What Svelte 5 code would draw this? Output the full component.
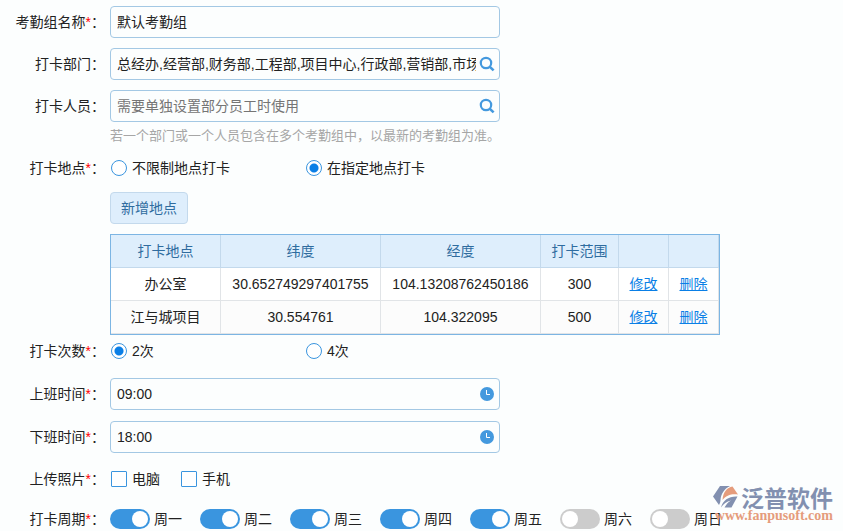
<script lang="ts">
	type Place = { name: string; lat: string; lng: string; range: number };

	let groupName = $state('默认考勤组');
	let departments = $state('总经办,经营部,财务部,工程部,项目中心,行政部,营销部,市场部');
	let members = $state('');
	let placeMode = $state('fixed');
	let times = $state(2);
	let startTime = $state('09:00');
	let endTime = $state('18:00');
	let photo = $state({ pc: false, phone: false });

	let places: Place[] = $state([
		{ name: '办公室', lat: '30.652749297401755', lng: '104.13208762450186', range: 300 },
		{ name: '江与城项目', lat: '30.554761', lng: '104.322095', range: 500 }
	]);

	let days = $state([
		{ label: '周一', on: true },
		{ label: '周二', on: true },
		{ label: '周三', on: true },
		{ label: '周四', on: true },
		{ label: '周五', on: true },
		{ label: '周六', on: false },
		{ label: '周日', on: false }
	]);
</script>

{#snippet caption(text: string, required: boolean)}
	{text}{#if required}<span class="star">*</span>{/if}：
{/snippet}

{#snippet searchIcon()}
	<svg width="16" height="16" viewBox="0 0 16 16" aria-hidden="true">
		<circle cx="7" cy="7" r="5.2" fill="none" stroke="currentColor" stroke-width="2.2" />
		<path d="M10.600 10.600L14.600 14.400" stroke="currentColor" stroke-width="2.600" />
	</svg>
{/snippet}

{#snippet clockIcon()}
	<svg width="16" height="16" viewBox="0 0 16 16" aria-hidden="true">
		<circle cx="8" cy="8" r="7" fill="currentColor" />
		<path d="M7.500 4V8.500H11" fill="none" stroke="#fff" stroke-width="1" />
	</svg>
{/snippet}

<form class="page" onsubmit={(ev) => ev.preventDefault()}>
	<div class="row">
		<label class="caption" for="group-name">{@render caption('考勤组名称', true)}</label>
		<div class="field">
			<div class="box"><input id="group-name" type="text" bind:value={groupName} /></div>
		</div>
	</div>

	<div class="row">
		<label class="caption" for="departments">{@render caption('打卡部门', false)}</label>
		<div class="field">
			<div class="box">
				<input id="departments" type="text" bind:value={departments} />
				<button type="button" class="icon" aria-label="选择部门">{@render searchIcon()}</button>
			</div>
		</div>
	</div>

	<div class="row">
		<label class="caption" for="members">{@render caption('打卡人员', false)}</label>
		<div class="field">
			<div class="box">
				<input
					id="members"
					type="text"
					placeholder="需要单独设置部分员工时使用"
					bind:value={members}
				/>
				<button type="button" class="icon" aria-label="选择人员">{@render searchIcon()}</button>
			</div>
			<p class="hint">若一个部门或一个人员包含在多个考勤组中，以最新的考勤组为准。</p>
		</div>
	</div>

	<div class="row">
		<span class="caption short" id="place-caption">{@render caption('打卡地点', true)}</span>
		<div class="field">
			<div class="choices" role="radiogroup" aria-labelledby="place-caption">
				<label><input type="radio" value="any" bind:group={placeMode} />不限制地点打卡</label>
				<label><input type="radio" value="fixed" bind:group={placeMode} />在指定地点打卡</label>
			</div>
			<button type="button" class="add">新增地点</button>
			<table>
				<colgroup>
					<col class="col-name" />
					<col class="col-coord" />
					<col class="col-coord" />
					<col class="col-range" />
					<col class="col-action" />
					<col class="col-action" />
				</colgroup>
				<thead>
					<tr>
						<th>打卡地点</th>
						<th>纬度</th>
						<th>经度</th>
						<th>打卡范围</th>
						<th></th>
						<th></th>
					</tr>
				</thead>
				<tbody>
					{#each places as place}
						<tr>
							<td>{place.name}</td>
							<td>{place.lat}</td>
							<td>{place.lng}</td>
							<td>{place.range}</td>
							<td><a href="#edit">修改</a></td>
							<td><a href="#remove">删除</a></td>
						</tr>
					{/each}
				</tbody>
			</table>
		</div>
	</div>

	<div class="row tight">
		<span class="caption short" id="times-caption">{@render caption('打卡次数', true)}</span>
		<div class="field">
			<div class="choices" role="radiogroup" aria-labelledby="times-caption">
				<label><input type="radio" value={2} bind:group={times} />2次</label>
				<label><input type="radio" value={4} bind:group={times} />4次</label>
			</div>
		</div>
	</div>

	<div class="times">
		<div class="row">
			<label class="caption" for="start-time">{@render caption('上班时间', true)}</label>
			<div class="field">
				<div class="box">
					<input id="start-time" type="text" bind:value={startTime} />
					<button type="button" class="icon" aria-label="选择上班时间">{@render clockIcon()}</button>
				</div>
			</div>
		</div>

		<div class="row">
			<label class="caption" for="end-time">{@render caption('下班时间', true)}</label>
			<div class="field">
				<div class="box">
					<input id="end-time" type="text" bind:value={endTime} />
					<button type="button" class="icon" aria-label="选择下班时间">{@render clockIcon()}</button>
				</div>
			</div>
		</div>
	</div>

	<div class="row">
		<span class="caption short">{@render caption('上传照片', true)}</span>
		<div class="field checks">
			<label><input type="checkbox" bind:checked={photo.pc} />电脑</label>
			<label><input type="checkbox" bind:checked={photo.phone} />手机</label>
		</div>
	</div>

	<div class="row last">
		<span class="caption short">{@render caption('打卡周期', true)}</span>
		<div class="field days">
			{#each days as day}
				<label><input type="checkbox" role="switch" bind:checked={day.on} />{day.label}</label>
			{/each}
		</div>
	</div>

	<div class="brand">
		<div class="brand-name">
			<svg width="26" height="24" viewBox="0 0 26 24" aria-hidden="true">
				<path fill="#8290b0" d="M7 1H17C11 4 8 9 7.500 15C7.300 17 7 18.500 6 20L0 11.500Z" />
				<path fill="#e59c7c" d="M9.500 15C10 7 14 2.500 19.500 1.500L25 9.500C19 8.500 13 10 9.500 15Z" />
				<path fill="#8290b0" d="M8 22.500C10 15 16 11 24.500 11.500L18.500 22.500H11.500C13 20 14.500 17.500 18 15.500C13.500 16.500 10.500 19 8 22.500Z" />
			</svg>
			<span>泛普软件</span>
		</div>
		<div class="brand-url">www.fanpusoft.com</div>
	</div>
</form>

<style>
	:global(body) {
		background: #fcfefe;
	}
	.page {
		position: relative;
		box-sizing: border-box;
		padding: 6px 10px 2px 0;
		font: 14px/20px 'Liberation Sans', 'Noto Sans CJK SC', sans-serif;
		color: #222;
	}
	.row {
		display: flex;
		margin-top: 10px;
	}
	.row:first-child {
		margin-top: 0;
	}
	.row.tight {
		margin-top: 6px;
	}
	.row.last {
		margin-top: 20px;
	}
	.times {
		display: grid;
		gap: 11px;
		margin: 17px 0 16px;
	}
	.times .row,
	.times + .row {
		margin-top: 0;
	}
	.caption {
		flex: none;
		width: 105px;
		margin-right: 5px;
		line-height: 32px;
		text-align: right;
		white-space: nowrap;
	}
	.caption.short {
		line-height: 20px;
	}
	.star {
		color: #f00;
	}
	.field {
		flex: 1;
		min-width: 0;
	}

	.box {
		display: flex;
		align-items: center;
		box-sizing: border-box;
		max-width: 390px;
		height: 32px;
		padding: 0 4px 0 6px;
		border: 1px solid #a3c8e4;
		border-radius: 4px;
	}
	.box input {
		flex: 1;
		min-width: 0;
		padding: 0;
		border: 0;
		outline: none;
		background: none;
		font: inherit;
		color: inherit;
	}
	.box input::placeholder {
		color: #757575;
	}
	.icon {
		display: flex;
		flex: none;
		margin-left: 3px;
		padding: 0;
		border: 0;
		background: none;
		color: #4499de;
		cursor: pointer;
	}
	.hint {
		margin: 2px 0 0;
		font-size: 13px;
		line-height: 24px;
		color: #a6a6a6;
	}

	.choices,
	.checks,
	.days {
		display: flex;
	}
	.choices label,
	.checks label,
	.days label {
		display: flex;
		align-items: center;
		white-space: nowrap;
	}
	.choices label {
		width: 195px;
	}
	.checks label {
		width: 70px;
	}
	.days label {
		width: 90px;
	}
	input[type='radio'],
	input[type='checkbox'] {
		appearance: none;
		box-sizing: border-box;
		flex: none;
		width: 16px;
		height: 16px;
		margin: 0 5px 0 1px;
		border: 1px solid #3a95df;
		background: #fff;
	}
	input[type='radio'] {
		border-radius: 50%;
	}
	input[type='radio']:checked {
		background: radial-gradient(circle, #0a7fe6 4px, #fff 5px);
	}
	.checks input[type='checkbox'] {
		border-radius: 1px;
	}
	.checks input[type='checkbox']:checked {
		background: #3a95df;
	}
	.days input[type='checkbox'] {
		display: flex;
		width: 40px;
		height: 20px;
		margin: 0 4px 0 0;
		padding: 2px;
		border: 0;
		border-radius: 10px;
		background: #ccc;
	}
	.days input[type='checkbox']::before {
		content: '';
		width: 16px;
		height: 16px;
		border-radius: 50%;
		background: #fff;
	}
	.days input[type='checkbox']:checked {
		justify-content: flex-end;
		background: #3a95df;
	}

	.add {
		display: block;
		height: 32px;
		margin: 14px 0 10px;
		padding: 0 10px;
		border: 1px solid #c3d9ec;
		border-radius: 4px;
		background: #deeefc;
		font: inherit;
		color: #2f6c9f;
		cursor: pointer;
	}
	table {
		width: 100%;
		max-width: 610px;
		table-layout: fixed;
		border: 1px solid #7cb5e3;
		border-collapse: separate;
		border-spacing: 0;
		text-align: center;
	}
	.col-name {
		width: 110px;
	}
	.col-coord {
		width: 160px;
	}
	.col-range {
		width: 78px;
	}
	.col-action {
		width: 50px;
	}
	th,
	td {
		box-sizing: border-box;
		height: 33px;
		padding: 0;
		border-right: 1px solid #e1e4e7;
		border-bottom: 1px solid #e1e4e7;
	}
	th {
		border-color: #c3d9ec;
		background: #deeefc;
		font-weight: normal;
		color: #2f6c9f;
	}
	tbody tr {
		background: #fff;
	}
	tbody tr:nth-child(even) {
		background: #fcfcfc;
	}
	a {
		color: #0a7fe6;
	}

	/* brand mark floats over the bottom right corner of the form */
	.brand {
		position: absolute;
		right: 10px;
		bottom: 8px;
		pointer-events: none;
	}
	.brand-name {
		display: flex;
		align-items: center;
		justify-content: flex-end;
		gap: 2px;
		font: bold 23px/24px 'Noto Sans CJK SC', sans-serif;
		color: #8290b0;
	}
	.brand-url {
		font: bold 14px/14px 'Liberation Serif', serif;
		text-align: right;
		color: #e59c7c;
	}
</style>
